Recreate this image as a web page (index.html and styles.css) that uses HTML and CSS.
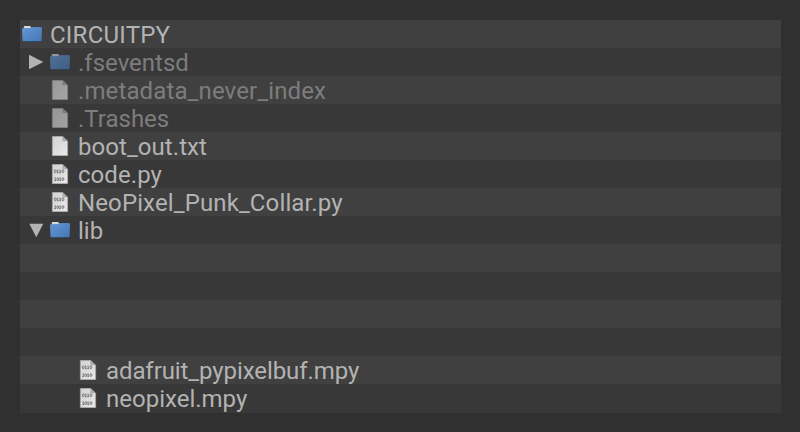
FILE: index.html
```html
<!DOCTYPE html>
<html lang="en">
<head>
<meta charset="utf-8">
<title>CIRCUITPY</title>
<link rel="stylesheet" href="styles.css">
</head>
<body>
<svg class="defs" aria-hidden="true">
  <defs>
    <linearGradient id="blue" x1="0" y1="0" x2="1" y2="1"><stop offset="0" stop-color="#6297d5"/><stop offset="1" stop-color="#4677b4"/></linearGradient>
    <linearGradient id="paper" x1="0" y1="0" x2="1" y2="1"><stop offset="0" stop-color="#d2d2d2"/><stop offset="1" stop-color="#e9e9e9"/></linearGradient>
    <symbol id="folder" viewBox="0 0 20 20">
      <path d="M1 17H19.5V17.9H1Z" fill="#263950"/>
      <path d="M1.5 5V2.6Q1.5 2 2.2 2H8.2Q8.8 2 9 3H18.5V5Z" fill="#5b7594"/>
      <path d="M2.2 2H8.2L9 4.5H1.8Z" fill="#d8d8d8"/>
      <path d="M0 5Q0 4.2 .8 4.2H8.5L9.7 3.2H19.2Q20 3.2 20 4L19.6 16.4Q19.5 17.2 18.8 17.2H1.4Q.6 17.2 .5 16.4Z" fill="url(#blue)"/>
    </symbol>
    <symbol id="file" viewBox="0 0 20 20">
      <path d="M2.3 .3H12.5L17.7 5.2V19.7H2.3Z" fill="url(#paper)" stroke="#9c9c9c" stroke-width=".6"/>
      <path d="M12.4 .3V5.2H17.7Z" fill="#aaa"/>
    </symbol>
    <symbol id="code" viewBox="0 0 20 20">
      <use href="#file"/>
      <g fill="none" stroke="#555" stroke-width=".7">
        <ellipse cx="5.3" cy="7.3" rx="1" ry="1.4"/><path d="M7.8 5.7V8.9M7.2 6.2L7.8 5.7M7 8.8H8.6M10.2 5.7V8.9M9.6 6.2L10.2 5.7M9.4 8.8H11"/><ellipse cx="12.9" cy="7.3" rx="1" ry="1.4"/>
        <path d="M5.3 13.5V16.7M4.6 14L5.3 13.5M4.4 16.6H6.2M10.2 13.5V16.7M9.6 14L10.2 13.5M9.4 16.6H11"/><ellipse cx="7.8" cy="15.1" rx="1" ry="1.4"/><ellipse cx="12.9" cy="15.1" rx="1" ry="1.4"/>
      </g>
    </symbol>
  </defs>
</svg>
<main class="tree">
  <div class="row root"><svg class="icon"><use href="#folder"/></svg><span class="volume">CIRCUITPY</span></div>
  <div class="row"><svg class="arrow" viewBox="0 0 16 16"><path d="M1 .8L15.3 8L1 15.2Z"/></svg><svg class="icon dim"><use href="#folder"/></svg><span class="muted">.fseventsd</span></div>
  <div class="row"><svg class="icon dim"><use href="#file"/></svg><span class="muted wide">.metadata_never_index</span></div>
  <div class="row"><svg class="icon dim"><use href="#file"/></svg><span class="muted">.Trashes</span></div>
  <div class="row"><svg class="icon"><use href="#file"/></svg><span class="slight">boot_out.txt</span></div>
  <div class="row"><svg class="icon"><use href="#code"/></svg><span class="slight">code.py</span></div>
  <div class="row"><svg class="icon"><use href="#code"/></svg><span class="wide">NeoPixel_Punk_Collar.py</span></div>
  <div class="row"><svg class="arrow" viewBox="0 0 16 16"><path d="M1.3 1.8H15.3L8.3 15.2Z"/></svg><svg class="icon"><use href="#folder"/></svg><span>lib</span></div>
  <div class="row"></div>
  <div class="row"></div>
  <div class="row"></div>
  <div class="row"></div>
  <div class="row child"><svg class="icon"><use href="#code"/></svg><span class="narrow">adafruit_pypixelbuf.mpy</span></div>
  <div class="row child last"><svg class="icon"><use href="#code"/></svg><span>neopixel.mpy</span></div>
</main>
</body>
</html>
```
FILE: styles.css
```css
body { margin: 0; background: #303030; color: #b3b3b3; font: 24px/28px Roboto, sans-serif; }
.defs { position: absolute; width: 0; height: 0; }
.tree { margin: 20px 19px 0 20px; }
.row { display: flex; align-items: flex-start; box-sizing: border-box; height: 28px; padding-left: 30px; background: #383838; white-space: nowrap; }
.row:nth-child(odd) { background: #404040; }
.row span { margin-top: 1px; }
.root { padding-left: 2px; }
.child { padding-left: 58px; }
.last { height: 29px; }
.icon { width: 20px; height: 20px; margin: 4px 8px 0 0; flex: none; }
.arrow { width: 16px; height: 16px; margin: 6px 6px 0 -22px; flex: none; fill: #b3b3b3; }
.muted { color: #7d7d7d; }
.dim { opacity: .6; }
.volume { letter-spacing: .23px; }
.wide { letter-spacing: .12px; }
.slight { letter-spacing: .06px; }
.narrow { letter-spacing: -.09px; }
```
